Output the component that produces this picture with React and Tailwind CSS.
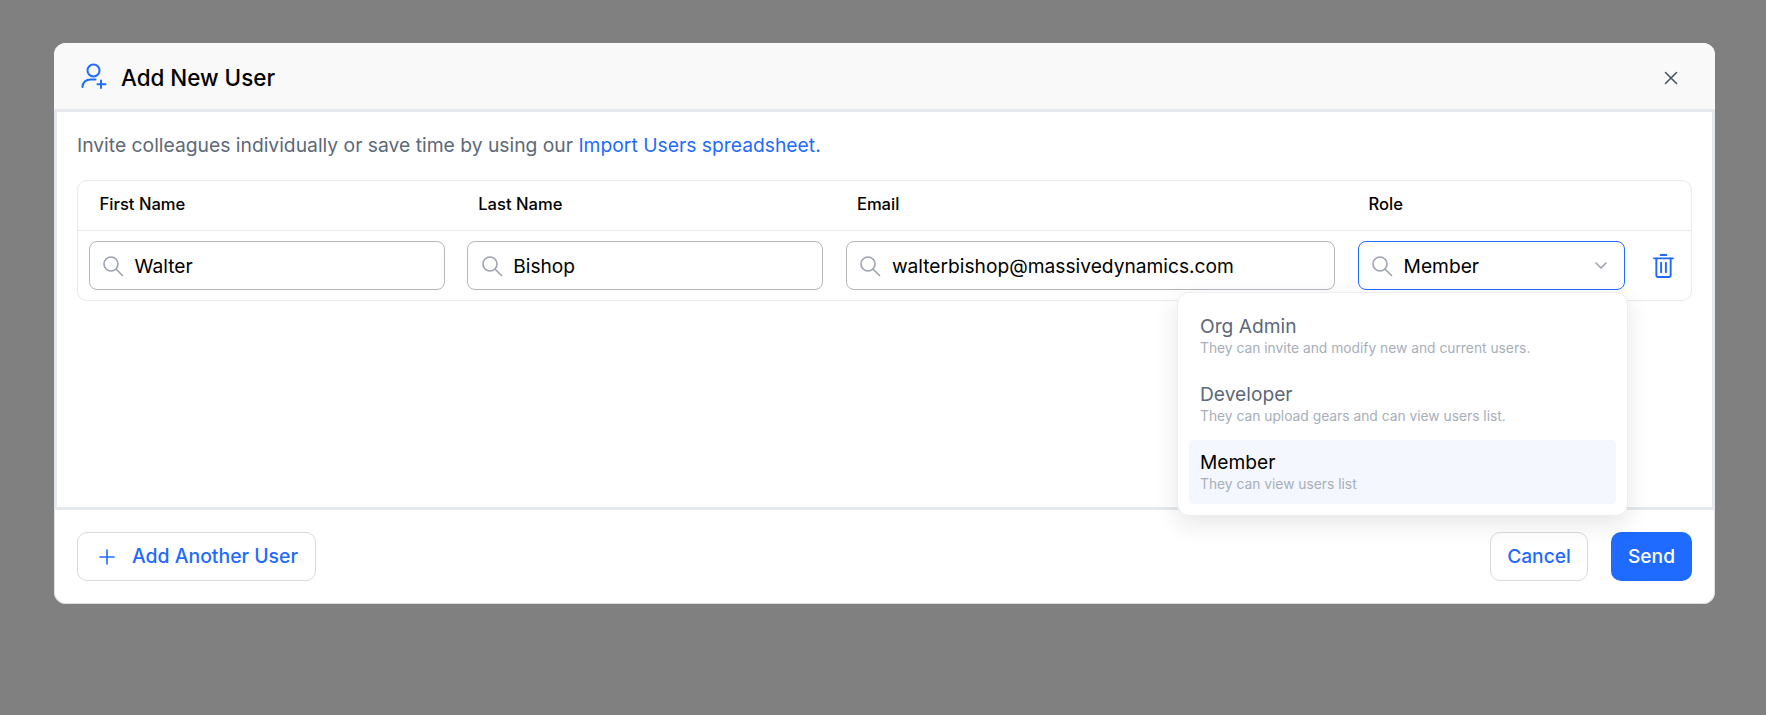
import React from "react";

const Search = () => (
  <svg width="22" height="22" viewBox="0 0 22 22" fill="none" stroke="#9ca3af" strokeWidth="1.6" strokeLinecap="round" className="shrink-0">
    <circle cx="9" cy="9" r="7" />
    <path d="M14.2 14.2 20.5 20.5" />
  </svg>
);

const Field = ({ value, active, chevron }) => (
  <div className={`flex h-[49px] items-center rounded-[8px] border-[1.5px] bg-white pl-[12.5px] pr-[16px] ${active ? "border-[#1f6bff]" : "border-[#b4b6ba]"}`}>
    <Search />
    <span className="ml-[10.5px] flex-1 pt-[1px] text-[19.2px] text-black">{value}</span>
    {chevron && (
      <svg width="14" height="9" viewBox="0 0 14 9" fill="none" stroke="#9ca3af" strokeWidth="1.6" strokeLinecap="round" strokeLinejoin="round">
        <path d="M2 2l5 5 5-5" />
      </svg>
    )}
  </div>
);

const Option = ({ title, sub, selected }) => (
  <div className={`flex h-[64px] flex-col justify-center rounded-[4px] px-[11px] ${selected ? "bg-[#f4f8fe]" : ""}`}>
    <div className={`text-[19.2px] leading-[23px] ${selected ? "text-black" : "text-[#5d6878]"}`}>{title}</div>
    <div className="mt-[1px] text-[13.8px] leading-[19px] text-[#a7aeb9]">{sub}</div>
  </div>
);

export default function App() {
  return (
    <div className="h-[715px] w-full overflow-hidden bg-[#808080] pl-[54px] pt-[43px]" style={{ fontFamily: "Inter, 'Liberation Sans', sans-serif" }}>
      <div className="relative w-[1661px] rounded-[12px] bg-white shadow-[inset_0_0_0_1px_rgba(215,215,218,0.8)]">
        <div className="flex h-[66px] items-center justify-between rounded-t-[12px] bg-[#f9f9f9] pl-[27px] pr-[37px]">
          <div className="flex items-center">
            <svg width="26" height="26" viewBox="0 0 26 26" fill="none" stroke="#1f6bff" strokeWidth="2" strokeLinecap="round">
              <circle cx="12.5" cy="7.5" r="6" />
              <path d="M1.5 24c0-4.5 3.5-7.5 8-7.5h5" />
              <path d="M20 17.5v7.5M16.5 21.2h8" />
            </svg>
            <span className="ml-[14px] pt-[3px] text-[22.4px] font-medium text-black">Add New User</span>
          </div>
          <svg width="14" height="14" viewBox="0 0 14 14" fill="none" stroke="#4b5563" strokeWidth="1.6" strokeLinecap="round" className="mt-[3px]">
            <path d="M1.5 1.5l11 11M12.5 1.5l-11 11" />
          </svg>
        </div>
        <div className="h-[401px] border-[3px] border-[#e5e8ec] px-[20px] pt-[19px]">
          <p className="text-[19.3px] leading-[28px] text-[#5d6878]">
            Invite colleagues individually or save time by using our <span className="text-[#1f6bff]">Import Users spreadsheet.</span>
          </p>
          <div className="mt-[21px] h-[121px] rounded-[10px] border-[1.5px] border-[#e8eaee]">
            <div className="grid h-[50px] grid-cols-[356px_356px_489px_267px] items-center gap-x-[22.7px] border-b-[1.5px] border-[#e8eaee] pb-[3px] pl-[10.5px] text-[16.6px] font-medium text-black">
              <span className="pl-[11px]">First Name</span>
              <span className="pl-[11px]">Last Name</span>
              <span className="pl-[11px]">Email</span>
              <span className="pl-[11px]">Role</span>
            </div>
            <div className="grid grid-cols-[356px_356px_489px_267px_1fr] items-center gap-x-[22.7px] pl-[10.5px] pt-[10px]">
              <Field value="Walter" />
              <Field value="Bishop" />
              <Field value="walterbishop@massivedynamics.com" />
              <Field value="Member" active chevron />
              <svg width="21" height="26" viewBox="0 0 22 26" fill="none" stroke="#1f6bff" strokeWidth="2" strokeLinecap="round" strokeLinejoin="round" className="ml-[6px]">
                <path d="M1 5h20M8 1.5h6" />
                <path d="M3.5 5v17.5a2 2 0 0 0 2 2h11a2 2 0 0 0 2-2V5" />
                <path d="M8.5 9.5v10M13.5 9.5v10" />
              </svg>
            </div>
          </div>
        </div>
        <div className="flex h-[94px] items-center justify-between px-[23px] pb-[1px]">
          <button className="flex h-[49px] w-[239px] items-center rounded-[10px] border-[1.5px] border-[#d9dade] pl-[21px] text-[19.4px] font-medium text-[#1f6bff]">
            <svg width="16" height="16" viewBox="0 0 16 16" fill="none" stroke="#1f6bff" strokeWidth="1.6" strokeLinecap="round">
              <path d="M8 1v14M1 8h14" />
            </svg>
            <span className="ml-[17px]">Add Another User</span>
          </button>
          <div className="flex items-center gap-[23px]">
            <button className="h-[49px] w-[98px] rounded-[10px] border-[1.5px] border-[#d9dade] text-[19.2px] font-medium text-[#1f6bff]">Cancel</button>
            <button className="h-[49px] w-[81px] rounded-[10px] bg-[#1f6bff] text-[19.2px] font-medium text-white">Send</button>
          </div>
        </div>
        <div className="absolute left-[1123px] top-[249px] w-[451px] rounded-[12px] border border-[#eceef1] bg-white p-[11px] shadow-[0_8px_24px_rgba(0,0,0,0.1)]">
          <Option title="Org Admin" sub="They can invite and modify new and current users." />
          <div className="h-[4px]" />
          <Option title="Developer" sub="They can upload gears and can view users list." />
          <div className="h-[4px]" />
          <Option title="Member" sub="They can view users list" selected />
        </div>
      </div>
    </div>
  );
}
